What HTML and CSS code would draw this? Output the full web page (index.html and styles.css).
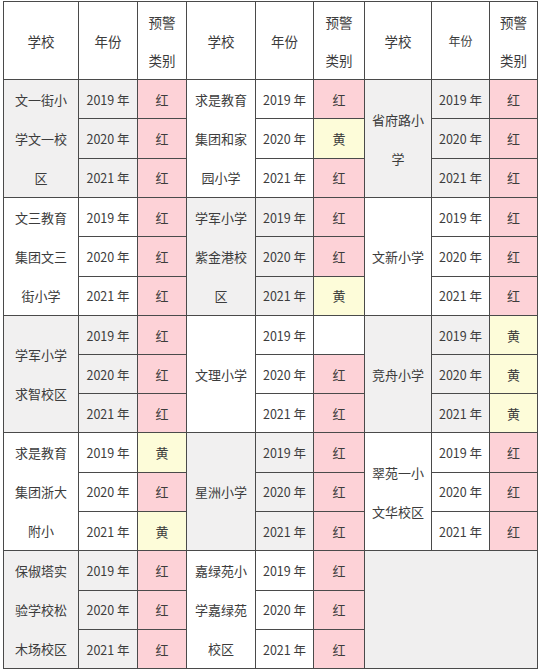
FILE: index.html
```html
<!DOCTYPE html>
<html lang="zh">
<head>
<meta charset="utf-8">
<link rel="stylesheet" href="styles.css">
</head>
<body>
<div class="wrap">
<table class="warn">
  <colgroup>
    <col class="c-s1"><col class="c-y1"><col class="c-a1">
    <col class="c-s2"><col class="c-y2"><col class="c-a2">
    <col class="c-s3"><col class="c-y3"><col class="c-a3">
  </colgroup>
  <thead>
    <tr class="head">
      <th>学校</th><th>年份</th><th>预警<br>类别</th>
      <th>学校</th><th>年份</th><th>预警<br>类别</th>
      <th>学校</th><th class="small">年份</th><th>预警<br>类别</th>
    </tr>
  </thead>
  <tbody>
    <tr>
      <td class="school g" rowspan="3">文一街小<br>学文一校<br>区</td><td class="yr g">2019 年</td><td class="red">红</td>
      <td class="school" rowspan="3">求是教育<br>集团和家<br>园小学</td><td class="yr">2019 年</td><td class="red">红</td>
      <td class="school g" rowspan="3">省府路小<br>学</td><td class="yr g">2019 年</td><td class="red">红</td>
    </tr>
    <tr>
      <td class="yr g">2020 年</td><td class="red">红</td>
      <td class="yr">2020 年</td><td class="yel">黄</td>
      <td class="yr g">2020 年</td><td class="red">红</td>
    </tr>
    <tr>
      <td class="yr g">2021 年</td><td class="red">红</td>
      <td class="yr">2021 年</td><td class="red">红</td>
      <td class="yr g">2021 年</td><td class="red">红</td>
    </tr>

    <tr>
      <td class="school" rowspan="3">文三教育<br>集团文三<br>街小学</td><td class="yr">2019 年</td><td class="red">红</td>
      <td class="school g" rowspan="3">学军小学<br>紫金港校<br>区</td><td class="yr g">2019 年</td><td class="red">红</td>
      <td class="school" rowspan="3">文新小学</td><td class="yr">2019 年</td><td class="red">红</td>
    </tr>
    <tr>
      <td class="yr">2020 年</td><td class="red">红</td>
      <td class="yr g">2020 年</td><td class="red">红</td>
      <td class="yr">2020 年</td><td class="red">红</td>
    </tr>
    <tr>
      <td class="yr">2021 年</td><td class="red">红</td>
      <td class="yr g">2021 年</td><td class="yel">黄</td>
      <td class="yr">2021 年</td><td class="red">红</td>
    </tr>

    <tr>
      <td class="school g" rowspan="3">学军小学<br>求智校区</td><td class="yr g">2019 年</td><td class="red">红</td>
      <td class="school" rowspan="3">文理小学</td><td class="yr">2019 年</td><td class="none"></td>
      <td class="school g" rowspan="3">竞舟小学</td><td class="yr g">2019 年</td><td class="yel">黄</td>
    </tr>
    <tr>
      <td class="yr g">2020 年</td><td class="red">红</td>
      <td class="yr">2020 年</td><td class="red">红</td>
      <td class="yr g">2020 年</td><td class="yel">黄</td>
    </tr>
    <tr>
      <td class="yr g">2021 年</td><td class="red">红</td>
      <td class="yr">2021 年</td><td class="red">红</td>
      <td class="yr g">2021 年</td><td class="yel">黄</td>
    </tr>

    <tr>
      <td class="school" rowspan="3">求是教育<br>集团浙大<br>附小</td><td class="yr">2019 年</td><td class="yel">黄</td>
      <td class="school g" rowspan="3">星洲小学</td><td class="yr g">2019 年</td><td class="red">红</td>
      <td class="school" rowspan="3">翠苑一小<br>文华校区</td><td class="yr">2019 年</td><td class="red">红</td>
    </tr>
    <tr>
      <td class="yr">2020 年</td><td class="red">红</td>
      <td class="yr g">2020 年</td><td class="red">红</td>
      <td class="yr">2020 年</td><td class="red">红</td>
    </tr>
    <tr>
      <td class="yr">2021 年</td><td class="yel">黄</td>
      <td class="yr g">2021 年</td><td class="red">红</td>
      <td class="yr">2021 年</td><td class="red">红</td>
    </tr>

    <tr>
      <td class="school g" rowspan="3">保俶塔实<br>验学校松<br>木场校区</td><td class="yr g">2019 年</td><td class="red">红</td>
      <td class="school" rowspan="3">嘉绿苑小<br>学嘉绿苑<br>校区</td><td class="yr">2019 年</td><td class="red">红</td>
      <td class="blank" rowspan="3" colspan="3"></td>
    </tr>
    <tr>
      <td class="yr g">2020 年</td><td class="red">红</td>
      <td class="yr">2020 年</td><td class="red">红</td>
    </tr>
    <tr>
      <td class="yr g">2021 年</td><td class="red">红</td>
      <td class="yr">2021 年</td><td class="red">红</td>
    </tr>
  </tbody>
</table>
</div>
</body>
</html>
```

FILE: styles.css
```css
html, body {
  margin: 0;
  padding: 0;
  background: #ffffff;
}

.wrap {
  padding: 1px 0 0 3px;
}

.warn {
  border-collapse: collapse;
  table-layout: fixed;
  width: 534px;
  font-family: "Noto Sans CJK SC", "Noto Sans", sans-serif;
  font-size: 13px;
  color: #3c3c3c;
}

.c-s1 { width: 75px; }
.c-y1 { width: 59px; }
.c-a1 { width: 49px; }
.c-s2 { width: 69px; }
.c-y2 { width: 58px; }
.c-a2 { width: 51px; }
.c-s3 { width: 67px; }
.c-y3 { width: 58px; }
.c-a3 { width: 48px; }

.warn th,
.warn td {
  border: 1px solid #4a4a4a;
  padding: 0;
  text-align: center;
  vertical-align: middle;
  font-weight: normal;
}

.head {
  height: 78px;
}

.head th {
  line-height: 38px;
  font-size: 13.5px;
  background: #ffffff;
}

.head th.small {
  font-size: 12px;
}

.warn tbody tr {
  height: 39.1px;
}

.school {
  line-height: 39px;
  background: #ffffff;
}

.yr {
  font-size: 12.5px;
  background: #ffffff;
}

.g {
  background: #f1f0f0;
}

.red {
  background: #fdd2d7;
}

.yel {
  background: #fdfcd9;
}

.none {
  background: #ffffff;
}

.blank {
  background: #f0efef;
}
```
